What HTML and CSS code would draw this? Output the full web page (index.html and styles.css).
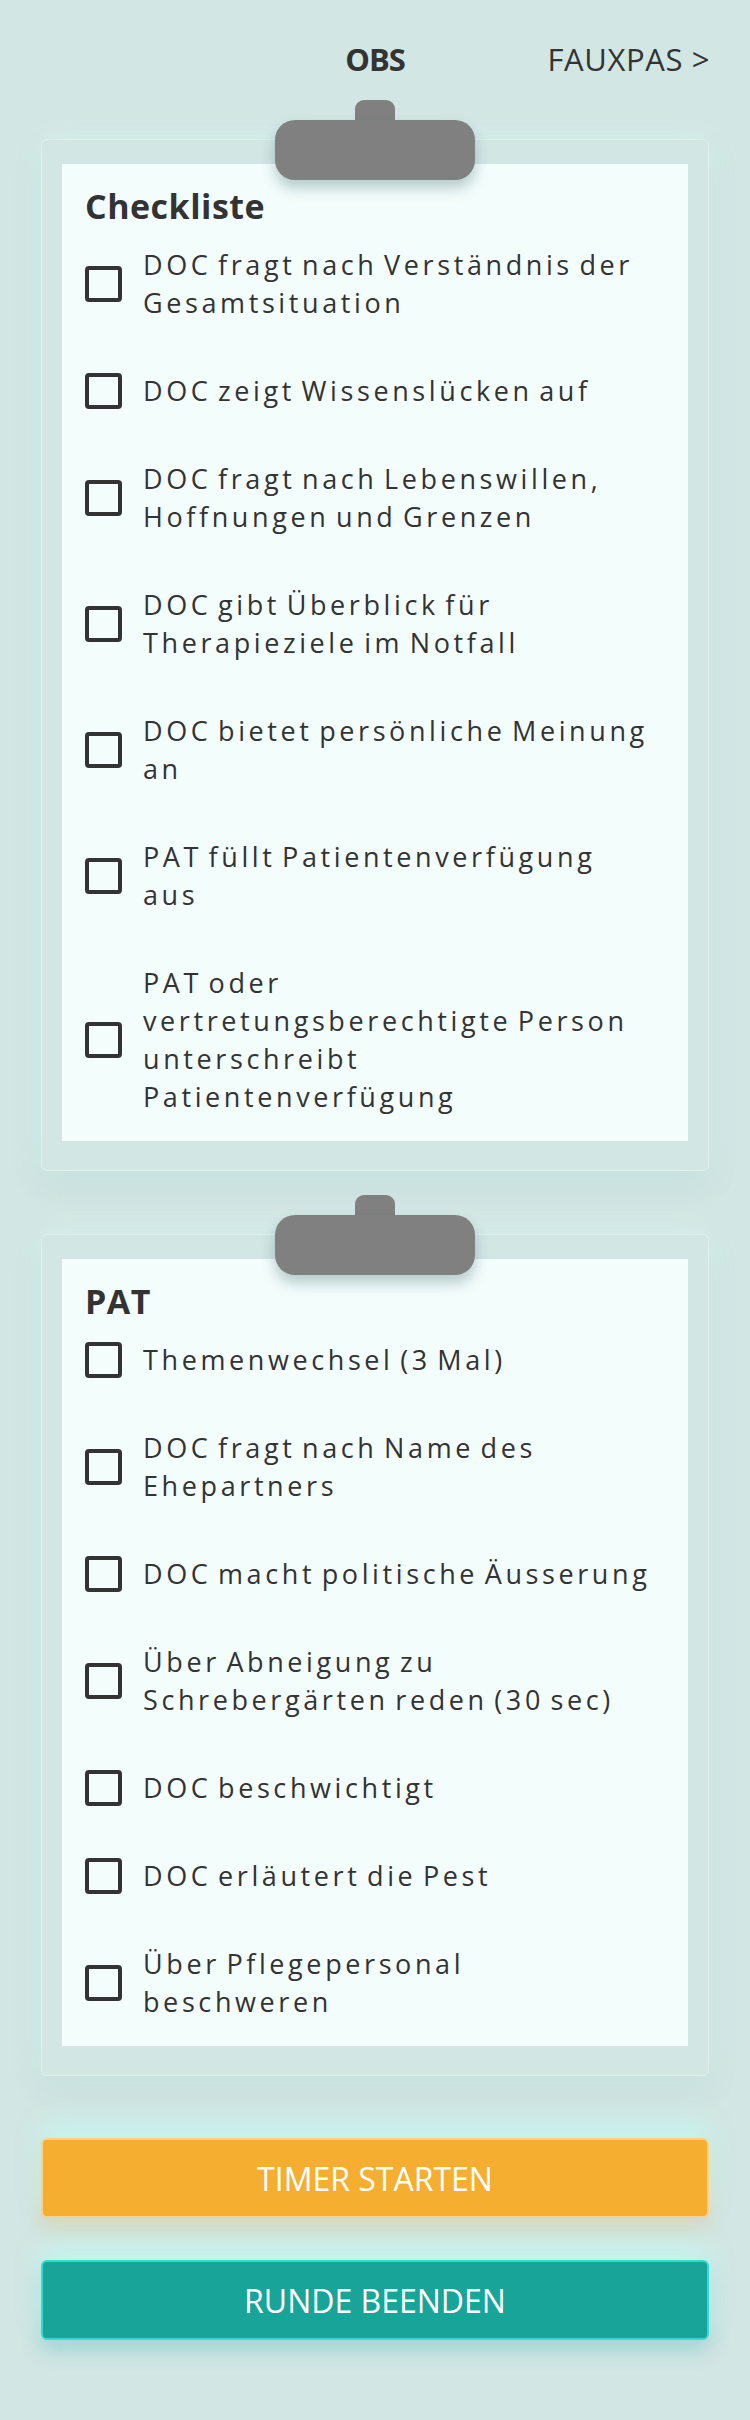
FILE: index.html
```html
<!DOCTYPE html>
<html lang="de">
<head>
<meta charset="utf-8">
<title>OBS</title>
<link rel="stylesheet" href="styles.css">
</head>
<body>
<div class="page">
  <header class="topbar">
    <span></span>
    <span class="tab tab-active">OBS</span>
    <span class="tab tab-next">FAUXPAS &gt;</span>
  </header>

  <section class="board">
    <div class="clip"><div class="clip-tab"></div><div class="clip-body"></div></div>
    <div class="sheet">
      <h2 class="sheet-title">Checkliste</h2>
      <ul class="checks">
        <li class="check"><span class="box"></span><span class="label">DOC fragt nach Verständnis der Gesamtsituation</span></li>
        <li class="check"><span class="box"></span><span class="label">DOC zeigt Wissenslücken auf</span></li>
        <li class="check"><span class="box"></span><span class="label">DOC fragt nach Lebenswillen, Hoffnungen und Grenzen</span></li>
        <li class="check"><span class="box"></span><span class="label">DOC gibt Überblick für Therapieziele im Notfall</span></li>
        <li class="check"><span class="box"></span><span class="label">DOC bietet persönliche Meinung an</span></li>
        <li class="check"><span class="box"></span><span class="label">PAT füllt Patientenverfügung aus</span></li>
        <li class="check"><span class="box"></span><span class="label">PAT oder vertretungsberechtigte Person unterschreibt Patientenverfügung</span></li>
      </ul>
    </div>
  </section>

  <section class="board">
    <div class="clip"><div class="clip-tab"></div><div class="clip-body"></div></div>
    <div class="sheet">
      <h2 class="sheet-title">PAT</h2>
      <ul class="checks">
        <li class="check"><span class="box"></span><span class="label">Themenwechsel (3 Mal)</span></li>
        <li class="check"><span class="box"></span><span class="label">DOC fragt nach Name des Ehepartners</span></li>
        <li class="check"><span class="box"></span><span class="label">DOC macht politische Äusserung</span></li>
        <li class="check"><span class="box"></span><span class="label">Über Abneigung zu Schrebergärten reden (30 sec)</span></li>
        <li class="check"><span class="box"></span><span class="label">DOC beschwichtigt</span></li>
        <li class="check"><span class="box"></span><span class="label">DOC erläutert die Pest</span></li>
        <li class="check"><span class="box"></span><span class="label">Über Pflegepersonal beschweren</span></li>
      </ul>
    </div>
  </section>

  <div class="actions">
    <button class="btn btn-timer">TIMER STARTEN</button>
    <button class="btn btn-end">RUNDE BEENDEN</button>
  </div>
</div>
</body>
</html>
```

FILE: styles.css
```css
* { box-sizing: border-box; }
html, body { margin: 0; padding: 0; }
body {
  background: #d2e6e4;
  font-family: "Open Sans", "Noto Sans", sans-serif;
  color: #333333;
}
.page {
  padding: 0 41px 81px;
}
.topbar {
  display: grid;
  grid-template-columns: 1fr auto 1fr;
  align-items: center;
  height: 100px;
  padding-top: 18px;
  font-size: 31px;
  line-height: 40px;
}
.tab-active { font-weight: 700; letter-spacing: -1px; }
.tab-next { justify-self: end; letter-spacing: 0.6px; margin-right: -1px; }

.board {
  position: relative;
  padding-top: 39px;
  margin-bottom: 24px;
}
.clip {
  position: absolute;
  top: 0;
  left: 50%;
  transform: translateX(-50%);
  display: flex;
  flex-direction: column;
  align-items: center;
  z-index: 2;
}
.clip-tab {
  width: 40px;
  height: 20px;
  background: #808080;
  border-radius: 9px 9px 0 0;
}
.clip-body {
  width: 200px;
  height: 60px;
  background: #808080;
  border-radius: 20px;
  box-shadow: 0 8px 14px rgba(40, 90, 90, 0.3);
}
.sheet {
  background: #d2e6e4;
  border: 1px solid #e2efee;
  border-radius: 6px;
  padding: 24px 20px 29px;
  box-shadow: 0 12px 30px rgba(60, 130, 120, 0.12), 0 0 30px rgba(225, 250, 247, 0.8);
}
.sheet-title {
  margin: 0;
  background: #f3fdfc;
  padding: 28px 23px 0;
  font-size: 34px;
  line-height: 29px;
  font-weight: 700;
  letter-spacing: 0.5px;
}
.checks {
  list-style: none;
  margin: 0;
  padding: 0 33px 0 23px;
  background: #f3fdfc;
}
.check {
  display: flex;
  align-items: center;
  gap: 21px;
  padding: 25px 0;
}
.box {
  flex: 0 0 auto;
  width: 37px;
  height: 36px;
  border: 4px solid #333333;
  border-radius: 4px;
}
.label {
  font-size: 27px;
  line-height: 38px;
  letter-spacing: 3.6px;
  word-spacing: -4px;
}

.actions {
  display: flex;
  flex-direction: column;
  gap: 42px;
  margin-top: 62px;
}
.btn {
  height: 80px;
  border-radius: 6px;
  font-family: inherit;
  font-size: 32px;
  color: #ffffff;
  letter-spacing: 0;
  cursor: pointer;
}
.btn-timer {
  background: #f5ae2f;
  border: 2px solid #fdd08c;
  box-shadow: 0 -14px 26px rgba(196, 246, 238, 0.9), 0 10px 20px rgba(230, 170, 60, 0.25);
}
.btn-end {
  background: #18a498;
  border: 2px solid #2fdccf;
  box-shadow: 0 -14px 26px rgba(196, 246, 238, 0.9), 0 10px 20px rgba(40, 170, 160, 0.3);
}
```
